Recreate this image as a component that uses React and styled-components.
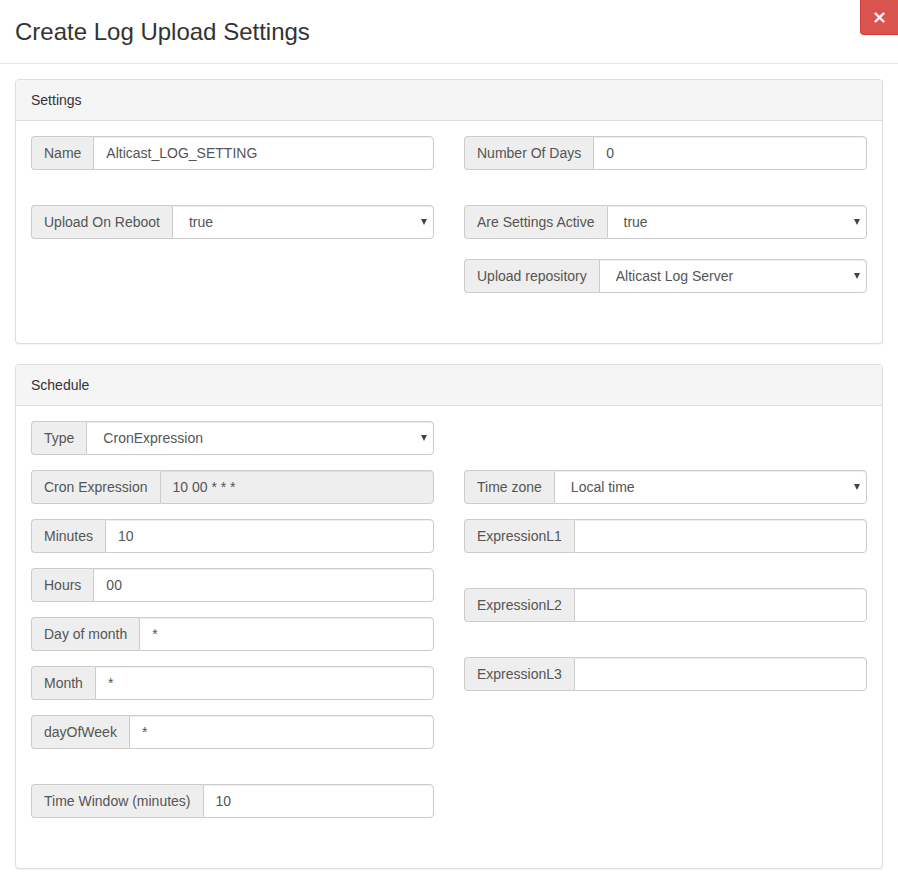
import React from "react";
import styled, { createGlobalStyle } from "styled-components";

const GlobalStyle = createGlobalStyle`
  body {
    margin: 0;
    background: #fff;
    font-family: "Liberation Sans", Arial, Helvetica, sans-serif;
    font-size: 14px;
    line-height: 1.42857;
    color: #333;
  }
  * {
    box-sizing: border-box;
  }
`;

const settingsLeft = [
  { label: "Name", value: "Alticast_LOG_SETTING", gap: 0 },
  { label: "Upload On Reboot", value: "true", select: true, gap: 35 },
];

const settingsRight = [
  { label: "Number Of Days", value: "0", gap: 0 },
  { label: "Are Settings Active", value: "true", select: true, gap: 35 },
  { label: "Upload repository", value: "Alticast Log Server", select: true, gap: 20 },
];

const scheduleLeft = [
  { label: "Type", value: "CronExpression", select: true, gap: 0 },
  { label: "Cron Expression", value: "10 00 * * *", readOnly: true, gap: 15 },
  { label: "Minutes", value: "10", gap: 15 },
  { label: "Hours", value: "00", gap: 15 },
  { label: "Day of month", value: "*", gap: 15 },
  { label: "Month", value: "*", gap: 15 },
  { label: "dayOfWeek", value: "*", gap: 15 },
  { label: "Time Window (minutes)", value: "10", gap: 35 },
];

const scheduleRight = [
  { label: "Time zone", value: "Local time", select: true, gap: 49 },
  { label: "ExpressionL1", value: "", gap: 15 },
  { label: "ExpressionL2", value: "", gap: 35 },
  { label: "ExpressionL3", value: "", gap: 35 },
];

function Field({ label, value, select, readOnly, gap }) {
  return (
    <InputGroup $gap={gap}>
      <Addon>{label}</Addon>
      {select ? (
        <SelectWrap>
          <Select defaultValue={value}>
            <option value={value}>{value}</option>
          </Select>
        </SelectWrap>
      ) : (
        <Input defaultValue={value} readOnly={readOnly} $readOnly={readOnly} />
      )}
    </InputGroup>
  );
}

function Panel({ title, left, right }) {
  return (
    <PanelBox>
      <PanelHeading>{title}</PanelHeading>
      <PanelBody>
        <Column>
          {left.map((f) => (
            <Field key={f.label} {...f} />
          ))}
        </Column>
        <Column>
          {right.map((f) => (
            <Field key={f.label} {...f} />
          ))}
        </Column>
      </PanelBody>
    </PanelBox>
  );
}

export default function App() {
  return (
    <>
      <GlobalStyle />
      <Modal>
        <Header>
          <Title>Create Log Upload Settings</Title>
          <CloseButton type="button">×</CloseButton>
        </Header>
        <Body>
          <Panel title="Settings" left={settingsLeft} right={settingsRight} />
          <Panel title="Schedule" left={scheduleLeft} right={scheduleRight} />
        </Body>
      </Modal>
    </>
  );
}

const Modal = styled.div`
  position: relative;
  width: 898px;
  background: #fff;
`;

const Header = styled.div`
  padding: 15px;
  border-bottom: 1px solid #e5e5e5;
`;

const Title = styled.h4`
  margin: 0;
  font-size: 24px;
  font-weight: 400;
  line-height: 33px;
  color: #333;
`;

const CloseButton = styled.button`
  position: absolute;
  top: 0;
  right: 0;
  width: 38px;
  height: 35px;
  padding: 0;
  border: 1px solid #d43f3a;
  border-top: none;
  border-right: none;
  border-radius: 0 0 0 4px;
  background: #d9534f;
  color: #fff;
  font-family: "DejaVu Sans", sans-serif;
  font-size: 18px;
  font-weight: 700;
  line-height: 1;
  cursor: pointer;
`;

const Body = styled.div`
  padding: 15px;
`;

const PanelBox = styled.div`
  margin-bottom: 20px;
  background: #fff;
  border: 1px solid #ddd;
  border-radius: 4px;
  box-shadow: 0 1px 1px rgba(0, 0, 0, 0.05);
`;

const PanelHeading = styled.div`
  padding: 10px 15px;
  background: #f5f5f5;
  border-bottom: 1px solid #ddd;
  border-radius: 3px 3px 0 0;
  color: #333;
  line-height: 20px;
`;

const PanelBody = styled.div`
  display: grid;
  grid-template-columns: 1fr 1fr;
  column-gap: 30px;
  padding: 15px 15px 50px;
`;

const Column = styled.div`
  display: flex;
  flex-direction: column;
`;

const InputGroup = styled.div`
  display: flex;
  height: 34px;
  margin-top: ${(p) => p.$gap}px;
`;

const Addon = styled.span`
  display: block;
  flex-shrink: 0;
  padding: 6px 12px;
  background: #eee;
  border: 1px solid #ccc;
  border-right: none;
  border-radius: 4px 0 0 4px;
  color: #555;
  line-height: 20px;
  white-space: nowrap;
`;

const Input = styled.input`
  flex: 1;
  min-width: 0;
  height: 34px;
  padding: 6px 12px;
  border: 1px solid #ccc;
  border-radius: 0 4px 4px 0;
  background: ${(p) => (p.$readOnly ? "#eee" : "#fff")};
  box-shadow: inset 0 1px 1px rgba(0, 0, 0, 0.075);
  color: #555;
  font-family: inherit;
  font-size: 14px;
  line-height: 20px;
  outline: none;
`;

const SelectWrap = styled.div`
  position: relative;
  flex: 1;
  min-width: 0;

  &::after {
    content: "";
    position: absolute;
    top: 14px;
    right: 7px;
    border-left: 3px solid transparent;
    border-right: 3px solid transparent;
    border-top: 6px solid #444;
    pointer-events: none;
  }
`;

const Select = styled.select`
  width: 100%;
  height: 34px;
  padding: 6px 20px 6px 16px;
  border: 1px solid #ccc;
  border-radius: 0 4px 4px 0;
  background: #fff;
  box-shadow: inset 0 1px 1px rgba(0, 0, 0, 0.075);
  color: #555;
  font-family: inherit;
  font-size: 14px;
  line-height: 20px;
  appearance: none;
  -webkit-appearance: none;
  outline: none;
`;
